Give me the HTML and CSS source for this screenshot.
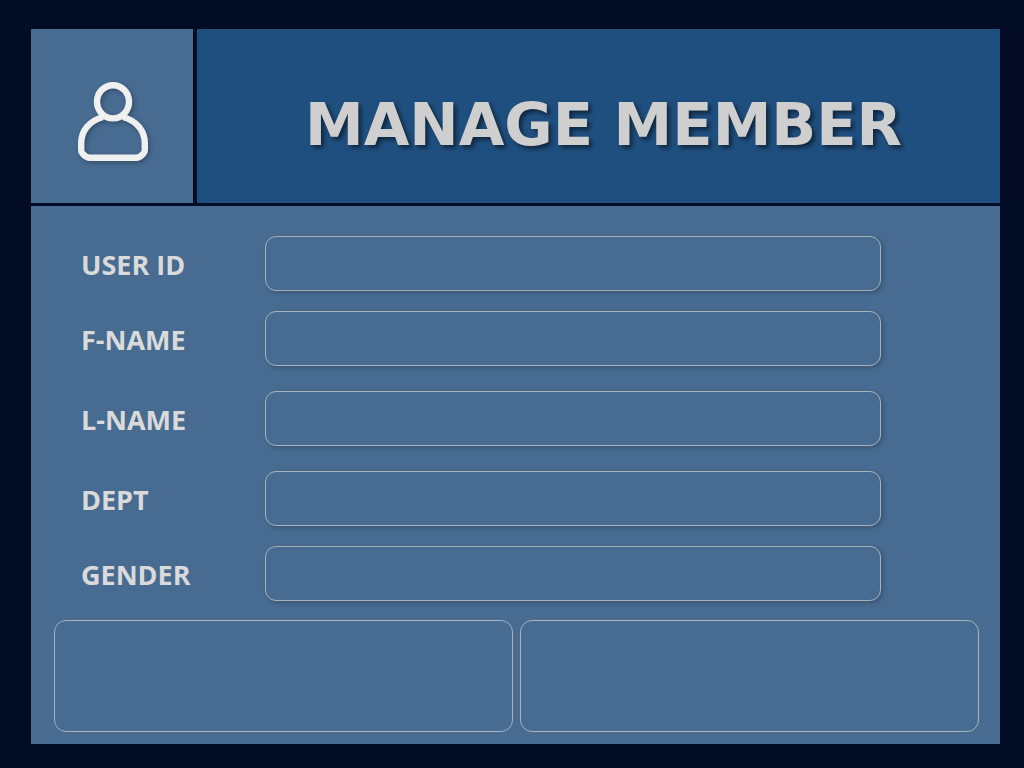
FILE: index.html
```html
<!DOCTYPE html>
<html lang="en">
<head>
<meta charset="utf-8">
<title>Manage Member</title>
<link rel="stylesheet" href="styles.css">
</head>
<body>
<main class="page">
  <header class="header">
    <div class="avatar">
      <svg class="avatar-icon" width="80" height="100" viewBox="0 0 80 100" fill="none" stroke="#f0f0f0" stroke-width="6.4" aria-hidden="true">
        <path d="M31 51C17 55 9.200 65 9.200 77V84Q9.200 86 10.500 87.500Q14 91.800 18 91.800H64Q68 91.800 71.500 87.500Q72.800 86 72.800 84V77C72.800 65 65 55 51 51"/>
        <ellipse cx="41" cy="35.800" rx="16" ry="16.600"/>
      </svg>
    </div>
    <div class="banner"><h1 class="title">MANAGE MEMBER</h1></div>
  </header>
  <form class="form">
    <div class="group">
      <div class="row"><label class="label" for="user-id">USER ID</label><input class="field" id="user-id" type="text"></div>
      <div class="row"><label class="label" for="f-name">F-NAME</label><input class="field" id="f-name" type="text"></div>
    </div>
    <div class="group">
      <div class="row"><label class="label" for="l-name">L-NAME</label><input class="field" id="l-name" type="text"></div>
    </div>
    <div class="group">
      <div class="row"><label class="label" for="dept">DEPT</label><input class="field" id="dept" type="text"></div>
      <div class="row"><label class="label" for="gender">GENDER</label><input class="field" id="gender" type="text"></div>
    </div>
    <div class="actions">
      <button class="action" type="button"></button>
      <button class="action" type="button"></button>
    </div>
  </form>
</main>
</body>
</html>
```
FILE: styles.css
```css
* { box-sizing: border-box; }

body {
  margin: 0;
  background: #020d25;
  font-family: "Open Sans", "Noto Sans", sans-serif;
}

.page {
  display: flex;
  flex-direction: column;
  gap: 3px;
  min-height: 100vh;
  padding: 29px 24px 24px 31px;
}

.header {
  display: grid;
  grid-template-columns: 162px 1fr;
  gap: 4px;
  min-height: 174px;
}

.avatar {
  display: flex;
  align-items: center;
  justify-content: center;
  background: #476b91;
}

.avatar-icon { filter: drop-shadow(2px 2px 2px rgba(0, 0, 0, 0.25)); }

.banner {
  display: flex;
  align-items: center;
  justify-content: center;
  padding: 18px 0 0 10px;
  background: #1f4f7f;
}

.title {
  margin: 0;
  color: #cfcfcf;
  font-family: "DejaVu Sans", sans-serif;
  font-size: 59px;
  line-height: 80px;
  font-weight: 700;
  text-shadow: 3px 3px 4px rgba(0, 0, 0, 0.5);
}

.form {
  display: flex;
  flex: 1;
  flex-direction: column;
  gap: 25px;
  padding: 30px 21px 12px 23px;
  background: #476b91;
}

.group {
  display: flex;
  flex-direction: column;
  gap: 20px;
  padding: 0 98px 0 27px;
}

.row {
  display: grid;
  grid-template-columns: 184px 1fr;
  align-items: center;
}

.label {
  padding-top: 2px;
  color: #dadada;
  font-size: 27px;
  line-height: 36px;
  font-weight: 700;
}

.field {
  width: 100%;
  height: 55px;
  padding: 0 16px;
  border: 1px solid #a9b1bb;
  border-radius: 11px;
  background: #476b91;
  box-shadow: 2px 2px 4px rgba(0, 0, 0, 0.2);
  color: #dadada;
  font: inherit;
  font-size: 27px;
}

.actions {
  display: grid;
  flex: 1;
  grid-template-columns: 1fr 1fr;
  gap: 7px;
  margin-top: -6px;
}

.action {
  min-height: 112px;
  border: 1px solid #a9b1bb;
  border-radius: 12px;
  background: transparent;
}
```
